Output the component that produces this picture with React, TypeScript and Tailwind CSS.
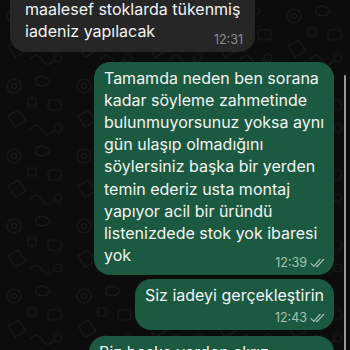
import React from 'react';

type Message = {
  id: number;
  out: boolean;
  lines: string[];
  time: string;
  timeBelow?: boolean;
};

const messages: Message[] = [
  {
    id: 1,
    out: false,
    lines: ['Merhaba siparişinizdeki ürün', 'maalesef stoklarda tükenmiş', 'iadeniz yapılacak'],
    time: '12:31',
  },
  {
    id: 2,
    out: true,
    lines: [
      'Tamamda neden ben sorana',
      'kadar söyleme zahmetinde',
      'bulunmuyorsunuz yoksa aynı',
      'gün ulaşıp olmadığını',
      'söylersiniz başka bir yerden',
      'temin ederiz usta montaj',
      'yapıyor acil bir üründü',
      'listenizdede stok yok ibaresi',
      'yok',
    ],
    time: '12:39',
  },
  { id: 3, out: true, lines: ['Siz iadeyi gerçekleştirin'], time: '12:43', timeBelow: true },
  { id: 4, out: true, lines: ['Biz başka yerden alırız', 'teşekkürler'], time: '12:44' },
];

/* double tick (read receipt) */
function Ticks() {
  return (
    <svg width="16" height="10" viewBox="0 0 16 10" fill="none" stroke="currentColor" strokeWidth="1.3" strokeLinecap="round" strokeLinejoin="round">
      <path d="M1.2 5.6 L3.9 8.4 L10 1.4" />
      <path d="M6.6 8.2 L7 8.6 L13.6 1.4" />
    </svg>
  );
}

/* faint chat wallpaper doodles */
function Wallpaper() {
  return (
    <svg className="absolute inset-0" width="350" height="350" fill="none" stroke="#181818" strokeWidth="1.2">
      <defs>
        <pattern id="doodle" width="70" height="70" patternUnits="userSpaceOnUse">
          <circle cx="14" cy="16" r="7" />
          <circle cx="14" cy="16" r="2.5" />
          <path d="M36 8 q8 -5 14 3 q-5 8 -14 3z" />
          <rect x="48" y="30" width="13" height="10" rx="3" />
          <path d="M8 46 l10 -6 l8 11 l-11 6z" />
          <path d="M30 60 q6 -9 12 0 t12 0" />
          <circle cx="58" cy="58" r="4" />
          <path d="M28 28 h8 v8 h-8z" />
        </pattern>
      </defs>
      <rect width="350" height="350" fill="url(#doodle)" stroke="none" />
    </svg>
  );
}

function Bubble({ m, className = '' }: { m: Message; className?: string }) {
  return (
    <div
      className={`relative rounded-[16px] pt-[5px] pb-[9px] text-[16px] leading-[22.2px] text-[#f2f4f3] ${
        m.out ? 'self-end bg-[#1b5a40] pl-[10px] pr-[10px]' : 'self-start bg-[#262626] pl-[15px] pr-[10px]'
      } ${className}`}
    >
      <p className="whitespace-pre">
        {m.lines.join('\n')}
        {!m.timeBelow && <span className={m.out ? 'inline-block w-[52px]' : 'inline-block w-[40px]'} />}
      </p>
      {m.timeBelow && <div className="h-[14px]" />}
      <span
        className={`absolute bottom-[5px] flex items-center gap-[3px] text-[12.5px] leading-[14px] ${
          m.out ? 'right-[8px] text-[#a3c2b2]' : 'right-[12px] text-[#8d8d8d]'
        }`}
      >
        {m.time}
        {m.out && <Ticks />}
      </span>
    </div>
  );
}

export default function App() {
  return (
    <div
      className="relative h-[350px] w-[350px] overflow-hidden bg-[#0c0c0c]"
      style={{ fontFamily: 'Inter, "Noto Sans", sans-serif' }}
    >
      <Wallpaper />
      <div className="relative flex flex-col pl-[10px] pr-[16px]">
        <Bubble m={messages[0]} className="-mt-[29px] w-[245px]" />
        <Bubble m={messages[1]} className="mt-[10px]" />
        <Bubble m={messages[2]} className="mt-[4px]" />
        <Bubble m={messages[3]} className="mt-[6px] w-[245px]" />
      </div>
      {/* scroll indicator */}
      <div className="absolute right-[4px] top-[75px] h-[300px] w-[2.5px] rounded-full bg-[#9a9a9a]" />
    </div>
  );
}
